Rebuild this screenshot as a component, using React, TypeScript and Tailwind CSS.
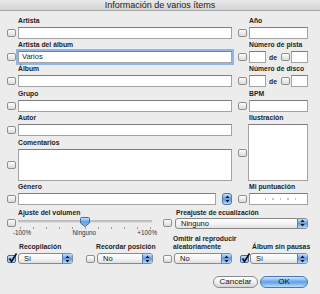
import React from "react";

const font = "font-['Liberation_Sans',Arial,sans-serif]";

function Check({ on = false }: { on?: boolean }) {
  return (
    <div
      className={`relative shrink-0 w-[9px] h-[8px] rounded-[2px] border ${
        on
          ? "border-[#44699a] bg-linear-to-b from-[#cfe4fa] via-[#7fb2ee] to-[#b9dafb]"
          : "border-[#8f8f8f] bg-linear-to-b from-white to-[#d9d9d9]"
      }`}
    >
      {on && (
        <svg className="absolute left-[0px] top-[-3px]" width="10" height="10" viewBox="0 0 10 10">
          <path d="M1.5 5.5 L3.5 8.5 L8.5 0.5" fill="none" stroke="#111" strokeWidth="1.6" />
        </svg>
      )}
    </div>
  );
}

function Arrows() {
  return (
    <svg width="5" height="8" viewBox="0 0 5 8">
      <path d="M2.5 0.5 L4.5 3 H0.5 Z M2.5 7.5 L4.5 5 H0.5 Z" fill="#151515" />
    </svg>
  );
}

function Popup({ text, className = "" }: { text: string; className?: string }) {
  return (
    <div
      className={`flex h-[11px] rounded-[3px] border border-[#8a8a8a] bg-linear-to-b from-white via-[#f4f4f4] to-[#e0e0e0] overflow-hidden ${className}`}
    >
      <span className="flex-1 pl-[5px] text-[7.5px] leading-[9px] text-[#111]">{text}</span>
      <div className="w-[10px] flex items-center justify-center bg-linear-to-b from-[#c8e0f9] via-[#5d9be6] to-[#b7d8fb] border-l border-[#5a7fb0]">
        <Arrows />
      </div>
    </div>
  );
}

function Label({ children, className = "" }: { children: React.ReactNode; className?: string }) {
  return (
    <div className={`text-[6.8px] leading-[9px] font-bold text-[#1e1e1e] whitespace-nowrap ${className}`}>
      {children}
    </div>
  );
}

function Field({ className = "", children }: { className?: string; children?: React.ReactNode }) {
  return (
    <div className={`h-[12px] bg-white border border-[#a3a3a3] border-t-[#7d7d7d] ${className}`}>{children}</div>
  );
}

function Block({
  label,
  className = "",
  children,
}: {
  label: string;
  className?: string;
  children: React.ReactNode;
}) {
  return (
    <div className={className}>
      <div className="h-[12px] pt-[1px] pl-[11px]">
        <Label>{label}</Label>
      </div>
      <div className="flex items-center">{children}</div>
    </div>
  );
}

function Slider() {
  const ticks = Array.from({ length: 11 }, (_, i) => 2 + i * 13);
  return (
    <svg className="ml-[2px]" width="134" height="12" viewBox="0 0 134 12">
      <rect x="0" y="3.5" width="134" height="1" fill="#8a8a8a" />
      <rect x="0" y="4.5" width="134" height="1" fill="#c9c9c9" />
      {ticks.map((x) => (
        <rect key={x} x={x} y="10" width="1" height="2" fill="#9a9a9a" />
      ))}
      <defs>
        <linearGradient id="thumb" x1="0" y1="0" x2="0" y2="1">
          <stop offset="0" stopColor="#d5e9fc" />
          <stop offset="0.5" stopColor="#5f9ee8" />
          <stop offset="1" stopColor="#9ccaf7" />
        </linearGradient>
      </defs>
      <path
        d="M62.5 1.5 Q62.5 0.5 63.5 0.5 H70.5 Q71.5 0.5 71.5 1.5 V6 L67 9.5 L62.5 6 Z"
        fill="url(#thumb)"
        stroke="#46699a"
        strokeWidth="1"
      />
    </svg>
  );
}

function TrackRow() {
  return (
    <>
      <Check />
      <Field className="ml-[2px] w-[17px]" />
      <span className="ml-[3px] w-[8px] text-[6.8px] font-bold leading-[9px]">de</span>
      <div className="ml-[4px]">
        <Check />
      </div>
      <Field className="ml-[1px] flex-1" />
    </>
  );
}

export default function App() {
  return (
    <div className={`w-[320px] h-[294px] bg-[#ececec] overflow-hidden ${font} text-[#1e1e1e]`}>
      {/* title bar */}
      <div className="h-[11px] border-b border-[#a7a7a7] bg-linear-to-b from-[#e9e9e9] to-[#d4d4d4] text-center text-[9px] leading-[10px] text-[#222]">
        Información de varios ítems
      </div>

      {/* upper fields */}
      <div className="flex pl-[7px] pt-[4px]">
        <div className="w-[231px] flex flex-col">
          <Block label="Artista">
            <Check />
            <Field className="ml-[2px] w-[214px]" />
          </Block>
          <Block label="Artista del álbum">
            <Check />
            <Field className="ml-[2px] w-[214px] border-[#6d8fc0] shadow-[0_0_0_2px_#8fb8e8] text-[7.5px] leading-[10px] pl-[3px]">
              Varios
            </Field>
          </Block>
          <Block label="Álbum">
            <Check />
            <Field className="ml-[2px] w-[214px]" />
          </Block>
          <Block label="Grupo" className="mt-[1px]">
            <Check />
            <Field className="ml-[2px] w-[214px]" />
          </Block>
          <Block label="Autor">
            <Check />
            <Field className="ml-[2px] w-[214px]" />
          </Block>
          <Block label="Comentarios" className="mt-[1px]">
            <Check />
            <Field className="ml-[2px] w-[214px] h-[32px]" />
          </Block>
          <Block label="Género">
            <Check />
            <Field className="ml-[2px] w-[198px]" />
            <div className="ml-[6px] w-[10px] h-[12px] rounded-[3px] border border-[#4f77ac] bg-linear-to-b from-[#c8e0f9] via-[#5d9be6] to-[#b7d8fb] flex items-center justify-center">
              <Arrows />
            </div>
          </Block>
        </div>

        <div className="w-[70px] flex flex-col">
          <Block label="Año">
            <Check />
            <Field className="ml-[2px] w-[59px]" />
          </Block>
          <Block label="Número de pista">
            <TrackRow />
          </Block>
          <Block label="Número de disco">
            <TrackRow />
          </Block>
          <Block label="BPM" className="mt-[1px]">
            <Check />
            <Field className="ml-[2px] w-[59px]" />
          </Block>
          <Block label="Ilustración">
            <div className="h-[57px] flex items-center">
              <Check />
            </div>
            <div className="ml-[1px] w-[60px] h-[57px] bg-white border border-[#a3a3a3] border-t-[#7d7d7d]" />
          </Block>
          <Block label="Mi puntuación">
            <Check />
            <Field className="ml-[2px] w-[59px] flex items-center justify-center gap-[6px] pl-[4px]">
              {[0, 1, 2, 3, 4].map((i) => (
                <span key={i} className="w-[1.5px] h-[1.5px] rounded-full bg-[#b5b5b5]" />
              ))}
            </Field>
          </Block>
        </div>
      </div>

      {/* volume / equalizer labels */}
      <div className="flex h-[10px] mt-[2px] pl-[7px] pt-[1px]">
        <Label className="w-[156px] pl-[11px]">Ajuste del volumen</Label>
        <Label className="pl-[13px]">Preajuste de ecualización</Label>
      </div>

      {/* slider / equalizer popup */}
      <div className="flex h-[12px] pl-[7px] items-center">
        <div className="w-[156px] flex items-center">
          <Check />
          <Slider />
        </div>
        <Check />
        <Popup text="Ninguno" className="ml-[3px] w-[133px]" />
      </div>

      {/* scale + option labels */}
      <div className="flex h-[24px] pl-[7px]">
        <div className="w-[156px] flex flex-col">
          <div className="h-[8px] ml-[6px] w-[144px] flex justify-between text-[6.3px] leading-[8px] text-[#333]">
            <span>-100%</span>
            <span>Ninguno</span>
            <span>+100%</span>
          </div>
          <div className="flex pt-[5px]">
            <Label className="w-[79px] pl-[12px]">Recopilación</Label>
            <Label className="pl-[10px]">Recordar posición</Label>
          </div>
        </div>
        <div className="flex items-end pb-[2px]">
          <div className="w-[77px] pl-[10px] text-[6.8px] leading-[8px] font-bold whitespace-nowrap">
            Omitir al reproducir
            <br />
            aleatoriamente
          </div>
          <Label className="pl-[12px]">Álbum sin pausas</Label>
        </div>
      </div>

      {/* popups */}
      <div className="flex h-[11px] pl-[7px] items-center">
        <div className="w-[156px] flex items-center">
          <Check on />
          <Popup text="Sí" className="ml-[2px] w-[55px]" />
          <div className="ml-[13px]">
            <Check />
          </div>
          <Popup text="No" className="ml-[2px] w-[56px]" />
        </div>
        <Check />
        <Popup text="No" className="ml-[2px] w-[58px]" />
        <div className="ml-[8px]">
          <Check on />
        </div>
        <Popup text="Sí" className="ml-[1px] w-[58px]" />
      </div>

      {/* buttons */}
      <div className="flex justify-end gap-[2px] mt-[12px] pr-[12px]">
        <div className="w-[45px] h-[12px] rounded-full border border-[#8c8c8c] bg-linear-to-b from-white via-[#f0f0f0] to-[#d4d4d4] flex items-center justify-center text-[8px] leading-[10px] text-[#111]">
          Cancelar
        </div>
        <div className="w-[48px] h-[12px] rounded-full border border-[#4a77b4] bg-linear-to-b from-[#d3e8fd] via-[#5e9fe9] to-[#b9dcfc] flex items-center justify-center text-[8px] leading-[10px] text-[#111]">
          OK
        </div>
      </div>
    </div>
  );
}
